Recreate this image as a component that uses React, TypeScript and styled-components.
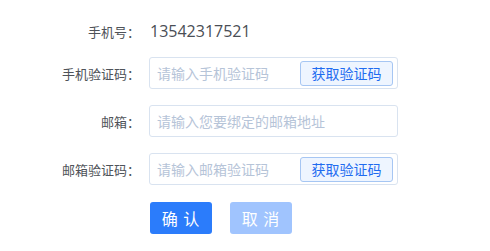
import React from 'react';
import styled, { createGlobalStyle } from 'styled-components';

const GlobalStyle = createGlobalStyle`
  html, body {
    margin: 0;
    padding: 0;
    background: #fff;
  }
  body {
    font-family: 'Noto Sans CJK SC', 'Noto Sans', sans-serif;
  }
`;

const Form = styled.form`
  display: flex;
  flex-direction: column;
  padding-top: 15px;
`;

const Row = styled.div<{ gap?: number }>`
  display: grid;
  grid-template-columns: 140px 249px;
  column-gap: 9px;
  align-items: center;
  height: 32px;
  margin-bottom: ${props => (props.gap !== undefined ? props.gap : 16)}px;
`;

const Label = styled.label`
  text-align: right;
  font-size: 13px;
  color: #4f5359;
  white-space: nowrap;
`;

const Value = styled.span`
  font-family: 'Open Sans', 'Noto Sans', sans-serif;
  font-size: 16px;
  color: #4a4e55;
  padding-left: 1px;
`;

const Field = styled.div`
  display: flex;
  align-items: center;
  box-sizing: border-box;
  height: 32px;
  border: 1px solid #d9e3f0;
  border-radius: 3px;
  padding: 0 4px 0 7px;
  background: #fff;
`;

const Input = styled.input`
  flex: 1;
  min-width: 0;
  border: none;
  outline: none;
  padding: 0;
  font-family: 'Noto Sans CJK SC', sans-serif;
  font-size: 14px;
  color: #303133;
  background: transparent;

  &::placeholder {
    color: #b6c4d8;
  }
`;

const CodeButton = styled.button`
  box-sizing: border-box;
  height: 25px;
  width: 93px;
  padding: 0;
  border: 1px solid #a6c6f3;
  border-radius: 3px;
  background: #eef5ff;
  color: #1f6cf0;
  font-family: 'Noto Sans CJK SC', sans-serif;
  font-size: 14px;
  line-height: 23px;
  cursor: pointer;
`;

const Actions = styled.div`
  display: flex;
  gap: 18px;
  padding-left: 150px;
  margin-top: 1px;
`;

const ActionButton = styled.button<{ disabled?: boolean }>`
  box-sizing: border-box;
  width: 62px;
  height: 32px;
  border: none;
  border-radius: 3px;
  padding: 0;
  background: ${props => (props.disabled ? '#a0c4fe' : '#2b7cfb')};
  color: #fff;
  font-family: 'Noto Sans CJK SC', sans-serif;
  font-size: 16px;
  letter-spacing: 1px;
  cursor: ${props => (props.disabled ? 'not-allowed' : 'pointer')};
`;

export default function App() {
  return (
    <>
      <GlobalStyle />
      <Form onSubmit={e => e.preventDefault()}>
        <Row gap={10}>
          <Label>手机号：</Label>
          <Value>13542317521</Value>
        </Row>
        <Row>
          <Label>手机验证码：</Label>
          <Field>
            <Input placeholder="请输入手机验证码" />
            <CodeButton type="button">获取验证码</CodeButton>
          </Field>
        </Row>
        <Row>
          <Label>邮箱：</Label>
          <Field>
            <Input placeholder="请输入您要绑定的邮箱地址" />
          </Field>
        </Row>
        <Row>
          <Label>邮箱验证码：</Label>
          <Field>
            <Input placeholder="请输入邮箱验证码" />
            <CodeButton type="button">获取验证码</CodeButton>
          </Field>
        </Row>
        <Actions>
          <ActionButton type="submit">确 认</ActionButton>
          <ActionButton type="button" disabled>
            取 消
          </ActionButton>
        </Actions>
      </Form>
    </>
  );
}
